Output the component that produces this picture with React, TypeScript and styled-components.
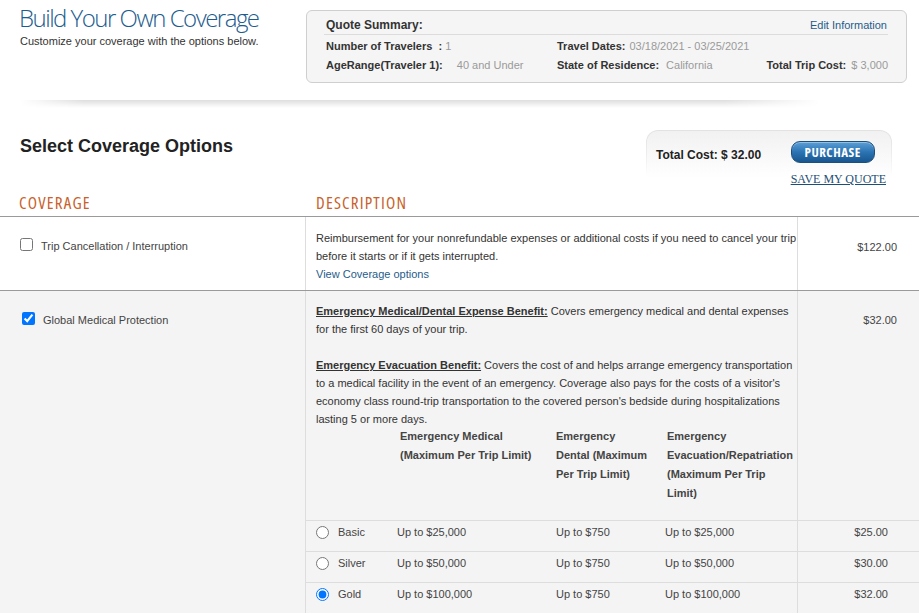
import React from 'react';
import styled, { createGlobalStyle } from 'styled-components';

const GlobalStyle = createGlobalStyle`
  html, body {
    margin: 0;
    padding: 0;
    background: #fff;
  }
  body {
    font-family: "Liberation Sans", Arial, sans-serif;
    color: #333;
  }
`;

const NARROW = `"Open Sans", "Liberation Sans", sans-serif`;

const options = [
  { name: 'Basic', medical: 'Up to $25,000', dental: 'Up to $750', evac: 'Up to $25,000', price: '$25.00' },
  { name: 'Silver', medical: 'Up to $50,000', dental: 'Up to $750', evac: 'Up to $50,000', price: '$30.00' },
  { name: 'Gold', medical: 'Up to $100,000', dental: 'Up to $750', evac: 'Up to $100,000', price: '$32.00' },
];

const App: React.FC = () => {
  return (
    <Page>
      <GlobalStyle />
      <Header>
        <TitleBlock>
          <Title>Build Your Own Coverage</Title>
          <Subtitle>Customize your coverage with the options below.</Subtitle>
        </TitleBlock>
        <QuoteBox>
          <QuoteHead>
            <QuoteTitle>Quote Summary:</QuoteTitle>
            <EditLink href="#">Edit Information</EditLink>
          </QuoteHead>
          <QuoteGrid>
            <Field>
              <FieldLabel>Number of Travelers&nbsp; :</FieldLabel>
              <FieldValue $gap={3}>1</FieldValue>
            </Field>
            <Field>
              <FieldLabel>Travel Dates:</FieldLabel>
              <FieldValue $gap={4}>03/18/2021 - 03/25/2021</FieldValue>
            </Field>
            <Field />
            <Field>
              <FieldLabel>AgeRange(Traveler 1):</FieldLabel>
              <FieldValue $gap={14}>40 and Under</FieldValue>
            </Field>
            <Field>
              <FieldLabel>State of Residence:</FieldLabel>
              <FieldValue $gap={7}>California</FieldValue>
            </Field>
            <Field>
              <FieldLabel>Total Trip Cost:</FieldLabel>
              <FieldValue $gap={5}>$ 3,000</FieldValue>
            </Field>
          </QuoteGrid>
        </QuoteBox>
      </Header>
      <Divider />

      <OptionsBar>
        <SectionTitle>Select Coverage Options</SectionTitle>
        <CostBox>
          <TotalCost>Total Cost: $ 32.00</TotalCost>
          <CostActions>
            <PurchaseButton type="button">PURCHASE</PurchaseButton>
            <SaveLink href="#">SAVE MY QUOTE</SaveLink>
          </CostActions>
        </CostBox>
      </OptionsBar>

      <ColumnHeads>
        <ColHead $pad={19}>COVERAGE</ColHead>
        <ColHead $pad={10}>DESCRIPTION</ColHead>
      </ColumnHeads>

      <PlainRow>
        <CoverCell $inset={20}>
          <Checkbox type="checkbox" readOnly />
          <CoverLabel>Trip Cancellation / Interruption</CoverLabel>
        </CoverCell>
        <DescCell $top={12} $bottom={0}>
          <Para>
            Reimbursement for your nonrefundable expenses or additional costs if you need to cancel your trip
            <br />
            before it starts or if it gets interrupted.
            <br />
            <DescLink href="#">View Coverage options</DescLink>
          </Para>
        </DescCell>
        <PriceCell $top={24} $right={22}>$122.00</PriceCell>
      </PlainRow>

      <MedicalRow>
        <CoverCell $inset={22}>
          <Checkbox type="checkbox" defaultChecked />
          <CoverLabel>Global Medical Protection</CoverLabel>
        </CoverCell>
        <MedicalRight>
          <MedicalTop>
            <DescCell $top={11} $bottom={17}>
              <Para>
                <Benefit>Emergency Medical/Dental Expense Benefit:</Benefit> Covers emergency medical and dental expenses
                <br />
                for the first 60 days of your trip.
              </Para>
              <Para>
                <Benefit>Emergency Evacuation Benefit:</Benefit> Covers the cost of and helps arrange emergency transportation
                <br />
                to a medical facility in the event of an emergency. Coverage also pays for the costs of a visitor's
                <br />
                economy class round-trip transportation to the covered person's bedside during hospitalizations
                <br />
                lasting 5 or more days.
              </Para>
              <SubHead>
                <span />
                <span>
                  Emergency Medical
                  <br />
                  (Maximum Per Trip Limit)
                </span>
                <span>
                  Emergency
                  <br />
                  Dental (Maximum
                  <br />
                  Per Trip Limit)
                </span>
                <span>
                  Emergency
                  <br />
                  Evacuation/Repatriation
                  <br />
                  (Maximum Per Trip
                  <br />
                  Limit)
                </span>
              </SubHead>
            </DescCell>
            <PriceCell $top={23} $right={22}>$32.00</PriceCell>
          </MedicalTop>
          {options.map(o => (
            <OptionRow key={o.name}>
              <OptionMain>
                <OptionName>
                  <Radio type="radio" name="plan" defaultChecked={o.name === 'Gold'} />
                  {o.name}
                </OptionName>
                <span>{o.medical}</span>
                <span>{o.dental}</span>
                <span>{o.evac}</span>
              </OptionMain>
              <PriceCell $top={5} $right={31}>{o.price}</PriceCell>
            </OptionRow>
          ))}
        </MedicalRight>
      </MedicalRow>
    </Page>
  );
};

const Page = styled.div`
  width: 919px;
  min-height: 614px;
  overflow: hidden;
`;

const Header = styled.header`
  display: grid;
  grid-template-columns: 287px 601px;
  align-items: start;
  padding: 0 0 17px 19px;
`;

const TitleBlock = styled.div`
  margin-top: 5px;
`;

const Title = styled.h1`
  margin: 0;
  font-family: ${NARROW};
  font-stretch: 90%;
  font-size: 24px;
  line-height: 26px;
  font-weight: 300;
  letter-spacing: -1.5px;
  color: #1d5c8e;
`;

const Subtitle = styled.p`
  margin: 4px 0 0 1px;
  font-size: 11px;
  line-height: 13px;
  color: #333;
`;

const QuoteBox = styled.section`
  box-sizing: border-box;
  height: 73px;
  margin-top: 10px;
  padding: 0 18px 0 17px;
  border: 1px solid #cfcfcf;
  border-radius: 6px;
  background: #f5f5f5;
`;

const QuoteHead = styled.div`
  display: flex;
  justify-content: space-between;
  align-items: baseline;
  height: 16px;
  padding: 7px 1px 0 2px;
  border-bottom: 1px solid #dcdcdc;
`;

const QuoteTitle = styled.span`
  font-size: 12px;
  line-height: 14px;
  font-weight: bold;
  color: #333;
`;

const EditLink = styled.a`
  font-size: 11px;
  color: #1f5c8b;
  text-decoration: none;
`;

const QuoteGrid = styled.div`
  display: grid;
  grid-template-columns: 231px 1fr auto;
  grid-template-rows: 19px 19px;
  align-items: center;
  padding: 1px 0 0 2px;
  font-size: 11px;
`;

const Field = styled.div`
  white-space: nowrap;
`;

const FieldLabel = styled.span`
  font-weight: bold;
  color: #333;
`;

const FieldValue = styled.span<{ $gap: number }>`
  margin-left: ${p => p.$gap}px;
  color: #9a9a9a;
`;

const Divider = styled.div`
  height: 8px;
  margin: 0 99px 0 20px;
  background: linear-gradient(rgba(0, 0, 0, 0.13), rgba(0, 0, 0, 0));
  -webkit-mask-image: linear-gradient(to right, transparent, #000 8%, #000 88%, transparent);
  mask-image: linear-gradient(to right, transparent, #000 8%, #000 88%, transparent);
`;

const OptionsBar = styled.div`
  display: flex;
  justify-content: space-between;
  align-items: flex-start;
  margin-top: 22px;
  padding: 0 27px 0 20px;
`;

const SectionTitle = styled.h2`
  margin: 5px 0 0;
  font-size: 18px;
  line-height: 22px;
  font-weight: bold;
  color: #222;
`;

const CostBox = styled.div`
  position: relative;
  box-sizing: border-box;
  display: flex;
  width: 246px;
  height: 60px;
  padding: 11px 6px 0 10px;
  border-radius: 12px 12px 0 0;
  background: linear-gradient(#f1f1f1, #fff 80%);

  &::before {
    content: '';
    position: absolute;
    inset: 0;
    border: 1px solid #e2e2e2;
    border-bottom: none;
    border-radius: inherit;
    -webkit-mask-image: linear-gradient(#000, transparent 75%);
    mask-image: linear-gradient(#000, transparent 75%);
    pointer-events: none;
  }
`;

const TotalCost = styled.div`
  margin-top: 7px;
  font-size: 12px;
  line-height: 14px;
  font-weight: bold;
  color: #222;
`;

const CostActions = styled.div`
  display: flex;
  flex-direction: column;
  align-items: flex-start;
  gap: 9px;
  margin-left: auto;
`;

const PurchaseButton = styled.button`
  width: 84px;
  height: 22px;
  padding: 0;
  border: 1px solid #1c4f7c;
  border-radius: 9px;
  background: linear-gradient(#5c9fd6, #2b74b3 50%, #18568f);
  box-shadow: inset 0 1px 0 rgba(255, 255, 255, 0.35);
  color: #fff;
  font-family: ${NARROW};
  font-stretch: 75%;
  font-size: 13px;
  font-weight: bold;
  letter-spacing: 0.5px;
  cursor: pointer;
`;

const SaveLink = styled.a`
  font-family: "Liberation Serif", "Times New Roman", serif;
  font-size: 12px;
  line-height: 14px;
  color: #1d4e75;
  text-decoration: underline;
`;

const ColumnHeads = styled.div`
  display: grid;
  grid-template-columns: 306px 1fr;
  align-items: end;
  height: 23px;
  padding-bottom: 3px;
  border-bottom: 1px solid #9a9a9a;
`;

const ColHead = styled.div<{ $pad: number }>`
  padding-left: ${p => p.$pad}px;
  font-family: ${NARROW};
  font-stretch: 75%;
  font-weight: 500;
  font-size: 17px;
  line-height: 20px;
  letter-spacing: 1.2px;
  color: #c8622b;
`;

const PlainRow = styled.div`
  display: grid;
  grid-template-columns: 306px 492px 1fr;
  height: 73px;
  border-bottom: 1px solid #9a9a9a;
  background: #fff;
`;

const CoverCell = styled.div<{ $inset: number }>`
  box-sizing: border-box;
  display: flex;
  align-items: flex-start;
  padding: 21px 0 0 ${p => p.$inset}px;
  border-right: 1px solid #ddd;
`;

const Checkbox = styled.input`
  width: 13px;
  height: 13px;
  margin: 0;
  flex: none;
`;

const CoverLabel = styled.span`
  margin: 2px 0 0 8px;
  font-size: 11px;
  line-height: 13px;
  color: #444;
`;

const DescCell = styled.div<{ $top: number; $bottom: number }>`
  box-sizing: border-box;
  padding: ${p => p.$top}px 0 ${p => p.$bottom}px 10px;
  border-right: 1px solid #ddd;
  font-size: 11px;
  line-height: 18px;
  color: #333;
`;

const Para = styled.p`
  margin: 0;
  white-space: nowrap;

  & + & {
    margin-top: 18px;
  }
`;

const DescLink = styled.a`
  color: #1f5c8b;
  text-decoration: none;
`;

const Benefit = styled.span`
  font-weight: bold;
  text-decoration: underline;
  color: #333;
`;

const PriceCell = styled.div<{ $top: number; $right: number }>`
  padding: ${p => p.$top}px ${p => p.$right}px 0 0;
  text-align: right;
  font-size: 11px;
  line-height: 13px;
  color: #444;
`;

const MedicalRow = styled.div`
  display: grid;
  grid-template-columns: 306px 1fr;
  background: #f4f4f4;
`;

const MedicalRight = styled.div`
  display: flex;
  flex-direction: column;
`;

const MedicalTop = styled.div`
  display: grid;
  grid-template-columns: 492px 1fr;
`;

const SubHead = styled.div`
  display: grid;
  grid-template-columns: 84px 156px 111px 1fr;
  margin-top: -1px;
  font-size: 11px;
  line-height: 19px;
  font-weight: bold;
  color: #444;
  white-space: nowrap;
`;

const OptionRow = styled.div`
  display: grid;
  grid-template-columns: 492px 1fr;
  height: 30px;
  border-top: 1px solid #ddd;
`;

const OptionMain = styled.div`
  box-sizing: border-box;
  display: grid;
  grid-template-columns: 81px 159px 109px 1fr;
  align-items: start;
  padding: 5px 0 0 10px;
  border-right: 1px solid #ddd;
  font-size: 11px;
  line-height: 13px;
  color: #444;
`;

const OptionName = styled.label`
  display: flex;
  align-items: center;
  gap: 9px;
`;

const Radio = styled.input`
  width: 13px;
  height: 13px;
  margin: 0;
`;

export default App;
